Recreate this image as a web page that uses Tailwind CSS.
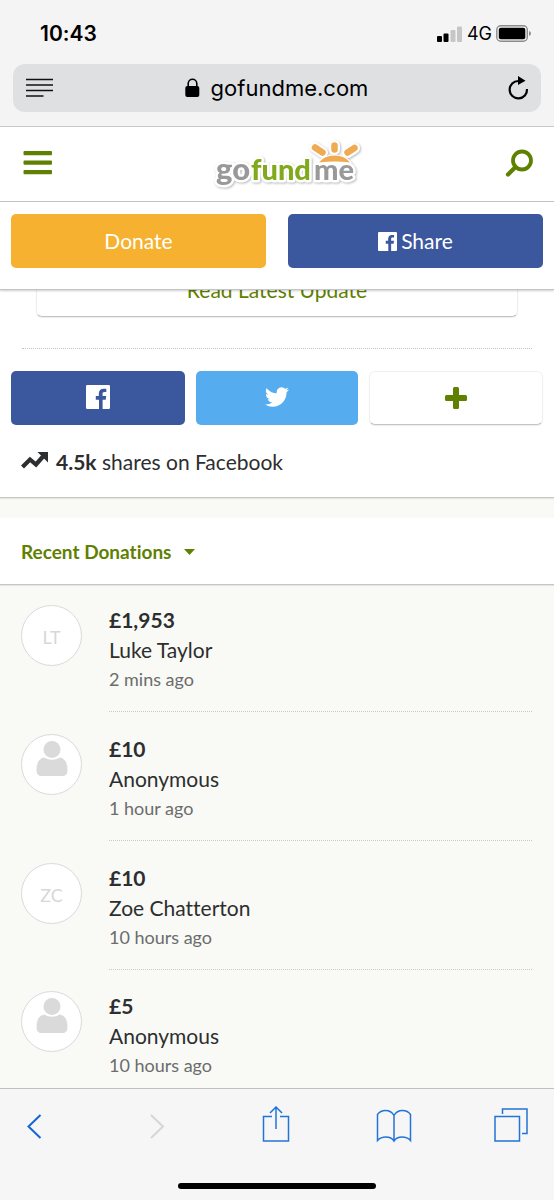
<!DOCTYPE html>
<html lang="en">
<head>
<meta charset="utf-8">
<meta name="viewport" content="width=device-width, initial-scale=1">
<title>GoFundMe</title>
<script src="https://cdn.jsdelivr.net/npm/@tailwindcss/browser@4"></script>
</head>
<body class="flex min-h-screen flex-col bg-[#f9faf6] font-['Lato',sans-serif] text-[#2d2e2f] [font-variant-ligatures:none]">

<!-- Browser chrome -->
<div class="border-b border-[#c9c9c9] bg-[#f4f4f4] px-[13px] pb-[14px] font-['Inter',sans-serif] text-black">
  <div class="flex h-16 items-center justify-between pr-[9px] pl-[27px] pt-[3px]">
    <span class="text-[21px] leading-6 font-semibold">10:43</span>
    <div class="flex items-center gap-1">
      <svg class="h-4 w-[26px]" viewBox="0 0 26 16" aria-label="Signal"><rect x="0" y="10" width="5" height="6" rx="1"/><rect x="6.500" y="7.500" width="5" height="8.500" rx="1"/><rect x="13.500" y="4" width="5" height="12" rx="1" fill="#c6c6c6"/><rect x="20" y="0.500" width="5" height="15.500" rx="1" fill="#c6c6c6"/></svg>
      <span class="text-[18px] leading-6">4G</span>
      <svg class="h-[17px] w-9" viewBox="0 0 36 17" aria-label="Battery"><rect x=".8" y=".8" width="30.500" height="15.400" rx="4" fill="none" stroke="#8c8c8c" stroke-width="1.400"/><rect x="2.800" y="2.800" width="26.500" height="11.400" rx="2" /><path d="M33 6v5q2-.8 2-2.500T33 6z" fill="#8c8c8c"/></svg>
    </div>
  </div>
  <div class="flex h-12 items-center justify-between rounded-xl bg-[#dfe0e2] pr-3 pl-[13px]">
    <button aria-label="Reader view"><svg class="h-5 w-[27px]" viewBox="0 0 27 20" stroke="#111" stroke-width="1.500"><path d="M0 1.500h27M0 7h27M0 12.500h27M0 18h17.500"/></svg></button>
    <div class="flex items-center gap-[11px] pr-[7px]">
      <svg class="h-5 w-[15px]" viewBox="0 0 15 20"><path d="M3.200 9V5.500a4.300 4.300 0 0 1 8.600 0V9" fill="none" stroke="#000" stroke-width="1.600"/><rect x=".3" y="8" width="14" height="11" rx="2"/></svg>
      <span class="text-[22px] leading-7">gofundme.com</span>
    </div>
    <button aria-label="Reload"><svg class="h-6 w-[22px]" viewBox="0 0 22 24"><path d="M11.500 5A8.700 8.700 0 1 0 20 13" fill="none" stroke="#000" stroke-width="2.200"/><path d="M11 0v9L18.500 4.700z"/></svg></button>
  </div>
</div>

<!-- Site header -->
<header class="flex h-[75px] items-center justify-between border-b border-[#c4c4c4] bg-white pr-5 pl-[23px]">
  <button aria-label="Menu" class="pb-0.5"><svg class="h-6 w-[30px]" viewBox="0 0 30 24" fill="#5f8000"><rect x=".5" y="0" width="28.500" height="4.200" rx="1"/><rect x=".5" y="9.500" width="28.500" height="4.200" rx="1"/><rect x=".5" y="19" width="28.500" height="4.200" rx="1"/></svg></button>
  <a href="#" aria-label="gofundme">
    <svg class="h-[50px] w-[156px] overflow-visible" viewBox="0 0 156 50" font-family="Lato" font-weight="900" font-size="29">
      <g class="drop-shadow-[1px_1px_1px_#bbbbbb]" stroke="#fff" stroke-width="5" stroke-linejoin="round" stroke-linecap="round">
        <path d="M119 24q5-6 14.500-6T148 24q-14 2.500-29 0z" fill="#fff"/>
        <path d="M114 8.500l7.500 5M133.500 6.500v4M153.500 9l-7 4.500" stroke-width="11" fill="none"/>
        <g paint-order="stroke"><text x="15" y="41" font-size="31" fill="#999">go</text><text x="50" y="41" fill="#80aa1c">fund</text><text x="113" y="41" fill="#999">me</text></g>
      </g>
      <path d="M114 8.500l7.500 5M133.500 6.500v4M153.500 9l-7 4.500" stroke="#f0ab52" stroke-width="6.500" stroke-linecap="round"/>
      <path d="M118 23.500q5-7 15.500-7t15.500 7q-15-2-31 0z" fill="#f0ab52"/>
    </svg>
  </a>
  <button aria-label="Search"><svg class="h-[30px] w-[30px]" viewBox="0 0 30 30" fill="none" stroke="#5f8000"><circle cx="18" cy="11.500" r="9" stroke-width="3.800"/><path d="M11.500 18l-7.500 7.500" stroke-width="4.200" stroke-linecap="round"/></svg></button>
</header>

<!-- Primary actions -->
<div class="z-10 grid grid-cols-2 gap-[22px] border-b border-[#c4c4c4] bg-white px-[11px] pt-3 pb-[21px] text-[21px] text-white shadow-[0_1px_2px_rgba(0,0,0,0.2)]">
  <button class="h-[54px] rounded-[5px] bg-[#f6b130]">Donate</button>
  <button class="flex h-[54px] items-center justify-center gap-1 rounded-[5px] bg-[#3b579d]">
    <svg class="h-[19px] w-[19px]" viewBox="0 0 24 24" fill="#fff"><path d="M1.300 0h21.400A1.300 1.300 0 0 1 24 1.300v21.400a1.300 1.300 0 0 1-1.300 1.300h-6.100v-9.300h3.100l.5-3.600h-3.600V8.800c0-1 .3-1.800 1.800-1.800h1.900V3.800c-.3 0-1.500-.1-2.800-.1-2.800 0-4.700 1.700-4.700 4.800v2.600H9.800v3.600h3.200V24H1.300A1.300 1.300 0 0 1 0 22.700V1.300A1.300 1.300 0 0 1 1.300 0z"/></svg>
    Share
  </button>
</div>

<!-- Update link and sharing -->
<section class="border-b border-[#c6c6c6] bg-white shadow-[0_1px_1px_rgba(0,0,0,0.08)]">
  <div class="flex h-7 flex-col justify-end overflow-hidden px-9 pb-px">
    <a href="#" class="block shrink-0 rounded-md border border-[#ededed] border-b-[#c4c4c4] pt-3 pb-3 text-center text-[21px] leading-7 text-[#5f8000] shadow-[0_1px_1px_rgba(0,0,0,0.08)]">Read Latest Update</a>
  </div>
  <div class="mx-[22px] mt-[30px] border-t border-dotted border-[#c4c4c4]"></div>
  <div class="mt-[22px] grid grid-cols-[16fr_15fr_16fr] gap-[11px] px-[11px]">
    <button aria-label="Share on Facebook" class="flex h-[54px] items-center justify-center rounded-[5px] bg-[#3b579d] pb-[3px]"><svg class="h-6 w-6" viewBox="0 0 24 24" fill="#fff"><path d="M1.300 0h21.400A1.300 1.300 0 0 1 24 1.300v21.400a1.300 1.300 0 0 1-1.300 1.300h-6.100v-9.300h3.100l.5-3.600h-3.600V8.800c0-1 .3-1.800 1.800-1.800h1.900V3.800c-.3 0-1.500-.1-2.800-.1-2.800 0-4.700 1.700-4.700 4.800v2.600H9.800v3.600h3.200V24H1.300A1.300 1.300 0 0 1 0 22.700V1.300A1.300 1.300 0 0 1 1.300 0z"/></svg></button>
    <button aria-label="Share on Twitter" class="flex h-[54px] items-center justify-center rounded-[5px] bg-[#55acee] pb-[3px]"><svg class="h-6 w-6" viewBox="0 0 24 24" fill="#fff"><path d="M24 4.560a9.800 9.800 0 0 1-2.830.77 4.930 4.930 0 0 0 2.170-2.720 9.900 9.900 0 0 1-3.130 1.190 4.920 4.920 0 0 0-8.380 4.480A13.970 13.970 0 0 1 1.670 3.150a4.920 4.920 0 0 0 1.520 6.570 4.900 4.900 0 0 1-2.230-.61v.06a4.920 4.920 0 0 0 3.950 4.830 4.900 4.900 0 0 1-2.220.08 4.930 4.930 0 0 0 4.600 3.420A9.870 9.870 0 0 1 0 19.540a13.940 13.940 0 0 0 7.550 2.210c9.050 0 14-7.500 14-13.980 0-.21 0-.42-.02-.63A10 10 0 0 0 24 4.560z"/></svg></button>
    <button aria-label="More sharing options" class="flex h-[54px] items-center justify-center rounded-md border border-[#f0f0f0] border-b-[#c4c4c4] bg-white shadow-[0_1px_1px_rgba(0,0,0,0.08)]"><svg class="h-[22px] w-[22px]" viewBox="0 0 22 22" fill="#5f8000"><rect x="8" y="0" width="6" height="22" rx="1.500"/><rect x="0" y="8" width="22" height="6" rx="1.500"/></svg></button>
  </div>
  <p class="flex items-center gap-2 pt-[23px] pb-[21px] pl-[21px] text-[21px] leading-7">
    <svg class="h-5 w-[27px]" viewBox="0 0 27 20" fill="none"><path d="M1.500 15l7.500-7.500 6 5 7-8" stroke="#2d2e2f" stroke-width="4.200"/><path d="M16.500 0H27v10.500z" fill="#2d2e2f"/></svg>
    <span><b class="font-bold">4.5k</b> shares on Facebook</span>
  </p>
</section>

<!-- Donations -->
<section class="mt-5 border-b border-[#c6c6c6] bg-white px-[21px] shadow-[0_1px_1px_rgba(0,0,0,0.08)]">
  <button class="flex h-[66px] items-center gap-[13px] pt-0.5 text-[19px] font-bold text-[#5f8000]">Recent Donations
    <svg class="h-[6px] w-[11px]" viewBox="0 0 11 6" fill="#5f8000"><path d="M0 0h11L5.500 6z"/></svg>
  </button>
</section>

<ul class="pr-[22px] pl-[21px] pt-[20px]">
  <li class="flex h-[129px] gap-[27px]">
    <div class="flex size-[61px] shrink-0 items-center justify-center rounded-full border border-[#dadada] bg-white pt-1 text-[18px] text-[#d8d8d8]">LT</div>
    <div class="h-[107px] grow border-b border-dotted border-[#c9c9c9]"><p class="text-[21px] leading-[30px] font-bold">£1,953</p><p class="text-[21px] leading-[30px]">Luke Taylor</p><p class="text-[18px] leading-7 text-[#6b6c6c]">2 mins ago</p></div>
  </li>
  <li class="flex h-[129px] gap-[27px]">
    <div class="flex size-[61px] shrink-0 items-start justify-center rounded-full border border-[#dadada] bg-white pt-[6px]"><svg class="h-9 w-8" viewBox="0 0 32 36" fill="#dadada"><circle cx="16" cy="8.500" r="8.500"/><path d="M8 16.500q8 4.500 16 0q7.500 1.500 7.500 12.500q0 6-5 6H5.500q-5 0-5-6Q.5 18 8 16.500z"/></svg></div>
    <div class="h-[107px] grow border-b border-dotted border-[#c9c9c9]"><p class="text-[21px] leading-[30px] font-bold">£10</p><p class="text-[21px] leading-[30px]">Anonymous</p><p class="text-[18px] leading-7 text-[#6b6c6c]">1 hour ago</p></div>
  </li>
  <li class="flex h-[128px] gap-[27px]">
    <div class="flex size-[61px] shrink-0 items-center justify-center rounded-full border border-[#dadada] bg-white pt-1 text-[18px] text-[#d8d8d8]">ZC</div>
    <div class="h-[107px] grow border-b border-dotted border-[#c9c9c9]"><p class="text-[21px] leading-[30px] font-bold">£10</p><p class="text-[21px] leading-[30px]">Zoe Chatterton</p><p class="text-[18px] leading-7 text-[#6b6c6c]">10 hours ago</p></div>
  </li>
  <li class="flex gap-[27px]">
    <div class="flex size-[61px] shrink-0 items-start justify-center rounded-full border border-[#dadada] bg-white pt-[6px]"><svg class="h-9 w-8" viewBox="0 0 32 36" fill="#dadada"><circle cx="16" cy="8.500" r="8.500"/><path d="M8 16.500q8 4.500 16 0q7.500 1.500 7.500 12.500q0 6-5 6H5.500q-5 0-5-6Q.5 18 8 16.500z"/></svg></div>
    <div><p class="text-[21px] leading-[30px] font-bold">£5</p><p class="text-[21px] leading-[30px]">Anonymous</p><p class="text-[18px] leading-7 text-[#6b6c6c]">10 hours ago</p></div>
  </li>
</ul>

<!-- Browser toolbar -->
<nav class="mt-auto border-t border-[#c0c0c0] bg-[#f6f6f6] pb-[11px]">
  <div class="flex h-[94px] items-start justify-between px-[26px] pt-[17px] text-[#2374d8]">
    <button aria-label="Back" class="flex w-[30px]"><svg class="h-10 w-4" viewBox="0 0 16 40" fill="none" stroke="#1267d6" stroke-width="2"><path d="M14.500 9L2.500 20.500l12 11.500"/></svg></button>
    <button aria-label="Forward" class="flex w-10 justify-center" disabled><svg class="h-10 w-4" viewBox="0 0 16 40" fill="none" stroke="#d6d6d6" stroke-width="2"><path d="M2 9l12 11.500L2 32"/></svg></button>
    <button aria-label="Share" class="flex w-9 justify-center"><svg class="h-10 w-7" viewBox="0 0 28 40" fill="none" stroke="currentColor" stroke-width="1.500"><path d="M10 10.500H1.500v24.500h25V10.500H18M14 23V1.500M8 7l6-6 6 6"/></svg></button>
    <button aria-label="Bookmarks" class="flex w-[38px] justify-center"><svg class="h-10 w-9" viewBox="0 0 36 40" fill="none" stroke="currentColor" stroke-width="1.500"><path d="M18 9.500C14 2.500 5 3.500 1.500 8.500v26c4-4.500 13-5 16.500.5 3.500-5.500 12.500-5 16.500-.5v-26C31 3.500 22 2.500 18 9.500zV35"/></svg></button>
    <button aria-label="Tabs" class="flex w-[34px]"><svg class="h-10 w-[34px]" viewBox="0 0 34 40" fill="none" stroke="currentColor" stroke-width="1.500"><path d="M1 10.500h24.500V35H1zM8.500 8V3H33v24.500h-5"/></svg></button>
  </div>
  <div class="mx-auto h-[6px] w-[198px] rounded-full bg-black"></div>
</nav>
</body>
</html>
